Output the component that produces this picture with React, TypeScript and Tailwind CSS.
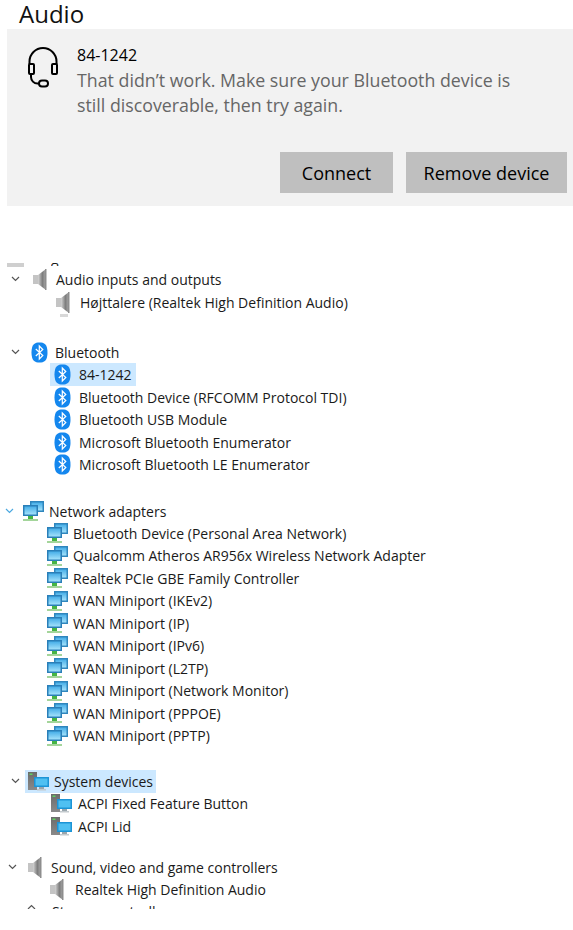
import React from "react";

function Chevron({ blue, up }: { blue?: boolean; up?: boolean }) {
  return (
    <svg width="9" height="6" viewBox="0 0 9 6" fill="none" stroke={blue ? "#4aa8e0" : "#555"} strokeWidth="1.2">
      <path d={up ? "M1 5l3.5-3.5L8 5" : "M1 1l3.5 3.5L8 1"} />
    </svg>
  );
}

function Speaker() {
  return (
    <svg width="14" height="21" viewBox="0 0 14 21" className="shrink-0">
      <defs>
        <linearGradient id="sp" x1="0" x2="1" y1="0" y2="0">
          <stop offset="0" stopColor="#d4d4d4" />
          <stop offset="0.55" stopColor="#7d7d7d" />
          <stop offset="1" stopColor="#a8a8a8" />
        </linearGradient>
      </defs>
      <rect x="0" y="6" width="6" height="9" fill="#c4c4c4" />
      <path d="M5 6L13 0v21L5 15z" fill="url(#sp)" />
      <rect x="12" y="0" width="1.5" height="21" fill="#8e8e8e" />
    </svg>
  );
}

function Bt() {
  return (
    <svg width="17" height="21" viewBox="0 0 17 21" className="shrink-0">
      <path d="M8.5 0.5C13 0.5 16.5 2 16.5 10.5S13 20.5 8.5 20.5 0.5 19 0.5 10.5 4 0.5 8.5 0.5z" fill="#1487ee" />
      <path d="M4.8 7l7 6.5-3.5 3.5V4l3.5 3.5L4.8 14" fill="none" stroke="#fff" strokeWidth="1.2" />
    </svg>
  );
}

function Net() {
  return (
    <svg width="21" height="20" viewBox="0 0 21 20" className="shrink-0">
      <defs>
        <linearGradient id="ns" x1="0" x2="0" y1="0" y2="1">
          <stop offset="0" stopColor="#46aee8" />
          <stop offset="1" stopColor="#a4e2fb" />
        </linearGradient>
      </defs>
      <rect x="7" y="0" width="14" height="11" fill="#2f86bd" />
      <rect x="8.5" y="1.5" width="11" height="8" fill="url(#ns)" />
      <rect x="0" y="4" width="15" height="11" fill="#2a7fb8" />
      <rect x="1.5" y="5.5" width="12" height="8" fill="url(#ns)" />
      <rect x="5" y="15" width="5" height="3" fill="#46b544" />
      <rect x="0" y="18" width="15" height="2" fill="#a4d59b" />
    </svg>
  );
}

function Sys() {
  return (
    <svg width="21" height="19" viewBox="0 0 21 19" className="shrink-0">
      <defs>
        <linearGradient id="tw" x1="0" x2="0" y1="0" y2="1">
          <stop offset="0" stopColor="#6b6b6b" />
          <stop offset="1" stopColor="#8a8a8a" />
        </linearGradient>
      </defs>
      <rect x="0" y="0" width="9" height="18" fill="url(#tw)" />
      <rect x="1.5" y="1.5" width="3" height="1.5" fill="#5fd05f" />
      <rect x="6" y="5" width="15" height="10" fill="#1c94d6" />
      <rect x="7.5" y="6.5" width="12" height="7" fill="#4fc0f2" />
      <rect x="11" y="15" width="5" height="2" fill="#9aa6ad" />
      <rect x="9" y="17" width="9" height="1.5" fill="#c3cace" />
    </svg>
  );
}

function Headset() {
  return (
    <svg width="32" height="42" viewBox="0 0 32 42" fill="none" stroke="#000" strokeWidth="2" className="shrink-0">
      <path d="M2.5 18v-2.5a13.5 13.5 0 0 1 27 0V18" />
      <rect x="2" y="18" width="5" height="10" rx="1" />
      <rect x="25" y="18" width="5" height="10" rx="1" />
      <path d="M4 28v3a6.5 6.5 0 0 0 6.5 6.5H12" />
      <rect x="12" y="34.5" width="9" height="6" rx="3" />
    </svg>
  );
}

function Row({ pad, text, icon, chev, sel, selClass, gap }: { pad: string; text: string; icon: React.ReactNode; chev?: React.ReactNode; sel?: boolean; selClass?: string; gap?: string }) {
  return (
    <div className={`flex items-center h-[22.5px] ${pad}`}>
      {chev}
      <div className={`flex items-center h-[22.5px] ${gap ?? "gap-[8px]"} ${sel ? "bg-[#cce8ff]" : ""} ${selClass ?? ""}`}>
        {icon}
        <span className="text-[14px] text-[#1a1a1a] whitespace-nowrap">{text}</span>
      </div>
    </div>
  );
}

export default function App() {
  return (
    <div className="w-[573px] h-[930px] bg-white overflow-hidden font-['Open_Sans',sans-serif]">
      <div className="h-[29px] pl-[19px] text-[24px] leading-[28px] text-[#111]">Audio</div>
      <div className="ml-[7px] h-[177px] bg-[#f2f2f2] flex flex-col">
        <div className="flex pl-[20px] pt-[17px]">
          <div className="w-[50px]"><Headset /></div>
          <div className="-mt-[3px]">
            <div className="text-[16px] leading-[25px] text-black">84-1242</div>
            <div className="text-[17.8px] leading-[25px] text-[#666] w-[450px]">That didn’t work. Make sure your Bluetooth device is still discoverable, then try again.</div>
          </div>
        </div>
        <div className="flex justify-end gap-[13px] pr-[6px] mt-[34px]">
          <div className="w-[113px] h-[41px] pt-[2px] bg-[#bfbfbf] flex items-center justify-center text-[18px] text-black">Connect</div>
          <div className="w-[161px] h-[41px] pt-[2px] bg-[#bfbfbf] flex items-center justify-center text-[18px] text-black">Remove device</div>
        </div>
      </div>

      <div className="h-[8px] mt-[54px] pt-[3px] flex items-start">
        <div className="ml-[7px] w-[17px] h-[4px] bg-[#cfcfcf]" />
        <div className="ml-[27px] h-[3px] overflow-hidden">
          <div className="-mt-[14px] text-[14px] leading-[20px] text-[#1a1a1a]">g</div>
        </div>
      </div>
      <div>
        <Row pad="pl-[11px]" chev={<div className="w-[22px]"><Chevron /></div>} icon={<Speaker />} text="Audio inputs and outputs" gap="gap-[9px]" />
        <div className="mt-[0.5px]">
          <Row pad="pl-[56px]" icon={<Speaker />} text="Højttalere (Realtek High Definition Audio)" gap="gap-[10px]" />
        </div>
        <div className="ml-[60px] w-[8px] h-[3px] bg-[#d8d8d8]" />
      </div>

      <div className="mt-[24.25px]">
        <Row pad="pl-[11px]" chev={<div className="w-[20px]"><Chevron /></div>} icon={<Bt />} text="Bluetooth" gap="gap-[7px]" />
        <Row pad="pl-[50px]" sel selClass="pr-[4px] pl-[4px]" icon={<Bt />} text="84-1242" />
        {["Bluetooth Device (RFCOMM Protocol TDI)", "Bluetooth USB Module", "Microsoft Bluetooth Enumerator", "Microsoft Bluetooth LE Enumerator"].map((t) => (
          <Row key={t} pad="pl-[54px]" icon={<Bt />} text={t} />
        ))}
      </div>

      <div className="mt-[23.5px]">
        <Row pad="pl-[5px] pt-[1px]" chev={<div className="w-[18px]"><Chevron blue /></div>} icon={<Net />} text="Network adapters" gap="gap-[5px]" />
        {["Bluetooth Device (Personal Area Network)", "Qualcomm Atheros AR956x Wireless Network Adapter", "Realtek PCIe GBE Family Controller", "WAN Miniport (IKEv2)", "WAN Miniport (IP)", "WAN Miniport (IPv6)", "WAN Miniport (L2TP)", "WAN Miniport (Network Monitor)", "WAN Miniport (PPPOE)", "WAN Miniport (PPTP)"].map((t) => (
          <Row key={t} pad="pl-[47px]" icon={<Net />} text={t} gap="gap-[5px]" />
        ))}
      </div>

      <div className="mt-[23.25px]">
        <Row pad="pl-[11px]" chev={<div className="w-[14px]"><Chevron /></div>} sel selClass="pl-[3px] pr-[3px]" icon={<Sys />} text="System devices" gap="gap-[5px]" />
        <Row pad="pl-[51px]" icon={<Sys />} text="ACPI Fixed Feature Button" gap="gap-[6px]" />
        <Row pad="pl-[51px]" icon={<Sys />} text="ACPI Lid" gap="gap-[6px]" />
      </div>

      <div className="mt-[18.5px]">
        <Row pad="pl-[8px]" chev={<div className="w-[20px]"><Chevron /></div>} icon={<Speaker />} text="Sound, video and game controllers" gap="gap-[9px]" />
        <Row pad="pl-[50px]" icon={<Speaker />} text="Realtek High Definition Audio" gap="gap-[11px]" />
      </div>

      <div className="flex h-[8px] overflow-hidden pl-[27px]">
        <div className="w-[25px] pt-[3px]"><Chevron up /></div>
        <span className="text-[14px] leading-[22px] text-[#1a1a1a] whitespace-nowrap">Storage controllers</span>
      </div>
    </div>
  );
}
